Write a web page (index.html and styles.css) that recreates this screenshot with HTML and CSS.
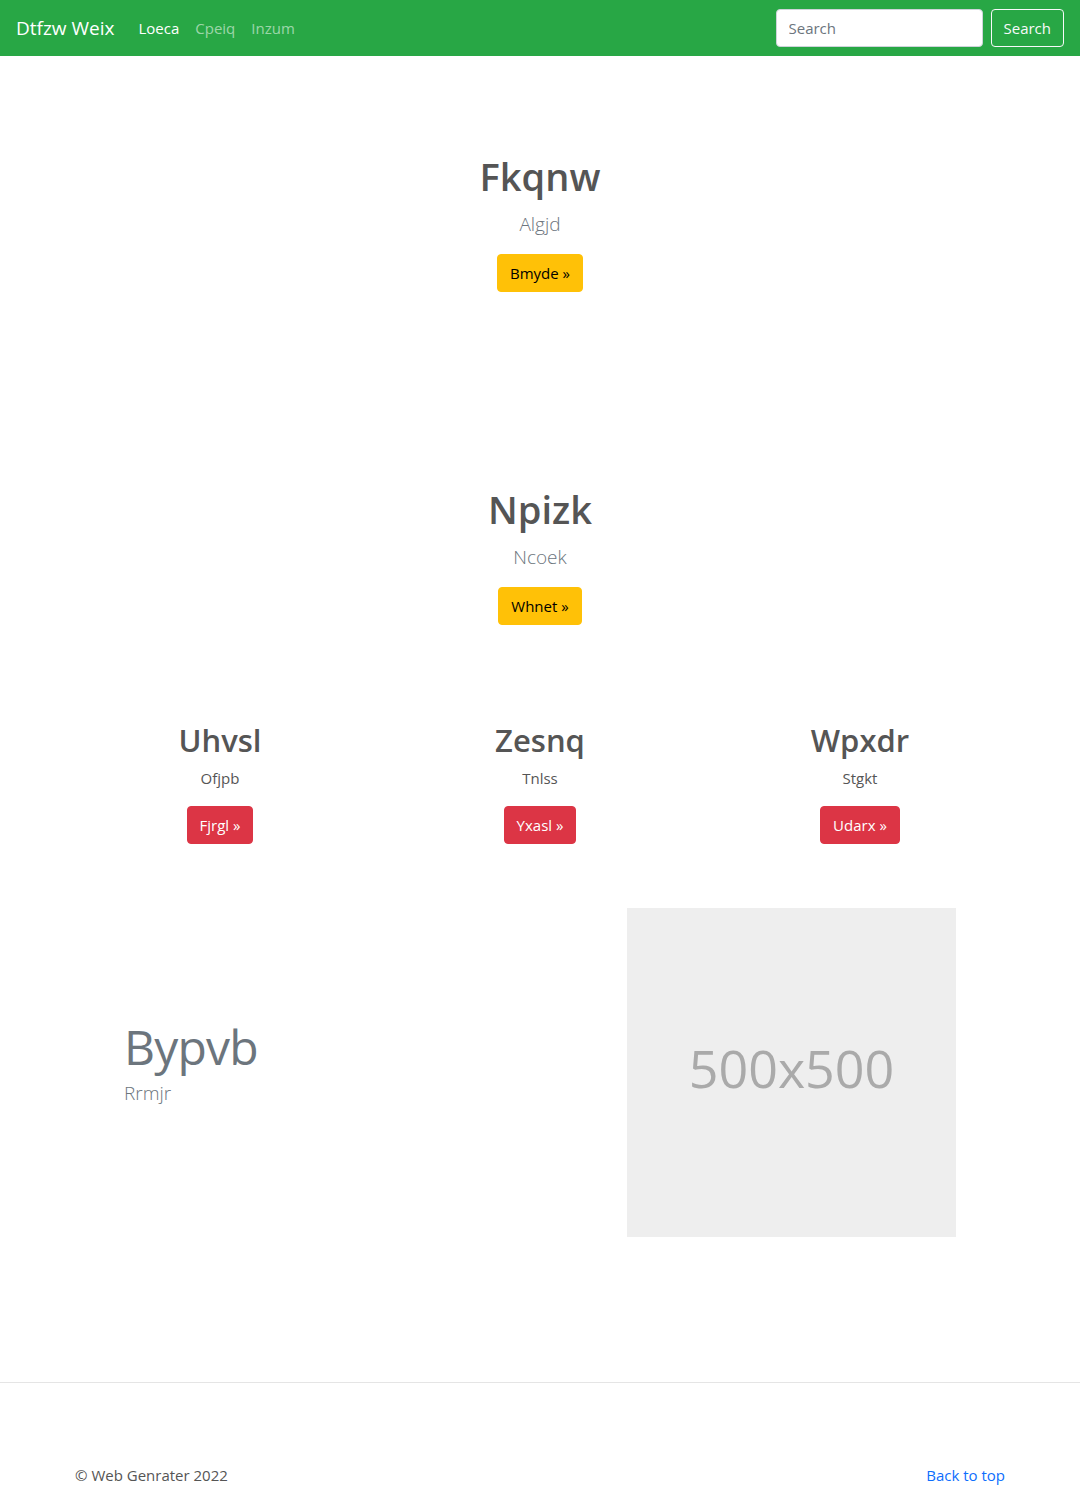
FILE: index.html
```html
<!DOCTYPE html>
<html lang="en">
<head>
<meta charset="utf-8">
<title>Dtfzw Weix</title>
<link rel="stylesheet" href="styles.css">
</head>
<body>
<header class="navbar">
  <div class="nav-left">
    <a class="brand" href="#">Dtfzw Weix</a>
    <nav class="nav-links">
      <a class="nav-link active" href="#">Loeca</a>
      <a class="nav-link" href="#">Cpeiq</a>
      <a class="nav-link" href="#">Inzum</a>
    </nav>
  </div>
  <form class="search">
    <input class="search-input" type="search" placeholder="Search">
    <button class="btn btn-outline-light" type="button">Search</button>
  </form>
</header>

<main>
  <section class="hero">
    <h1 class="hero-title">Fkqnw</h1>
    <p class="lead">Algjd</p>
    <a class="btn btn-warning" href="#">Bmyde »</a>
  </section>

  <section class="hero">
    <h1 class="hero-title">Npizk</h1>
    <p class="lead">Ncoek</p>
    <a class="btn btn-warning" href="#">Whnet »</a>
  </section>

  <section class="container cols">
    <div class="col">
      <h2 class="col-title">Uhvsl</h2>
      <p class="col-text">Ofjpb</p>
      <a class="btn btn-danger" href="#">Fjrgl »</a>
    </div>
    <div class="col">
      <h2 class="col-title">Zesnq</h2>
      <p class="col-text">Tnlss</p>
      <a class="btn btn-danger" href="#">Yxasl »</a>
    </div>
    <div class="col">
      <h2 class="col-title">Wpxdr</h2>
      <p class="col-text">Stgkt</p>
      <a class="btn btn-danger" href="#">Udarx »</a>
    </div>
  </section>

  <section class="container featurette">
    <div class="feat-text">
      <h2 class="feat-heading">Bypvb</h2>
      <p class="feat-lead">Rrmjr</p>
    </div>
    <div class="placeholder"><span>500x500</span></div>
  </section>
</main>

<hr class="divider">

<footer class="container footer">
  <p class="copy">© Web Genrater 2022</p>
  <a class="top-link" href="#">Back to top</a>
</footer>
</body>
</html>
```

FILE: styles.css
```css
* { box-sizing: border-box; }
html, body { margin: 0; padding: 0; }
body {
  font-family: "Open Sans", "Noto Sans", sans-serif;
  font-size: 16px;
  line-height: 1.5;
  color: #212529;
  background: #fff;
}
a { text-decoration: none; }

.navbar {
  height: 56px;
  background: #28a745;
  display: flex;
  align-items: center;
  justify-content: space-between;
  padding: 0 16px;
}
.nav-left { display: flex; align-items: center; }
.brand {
  color: #fff;
  font-size: 19px;
  line-height: 30px;
  margin-right: 16px;
}
.nav-links { display: flex; }
.nav-link {
  color: rgba(255,255,255,.55);
  font-size: 15px;
  padding: 8px 8px;
}
.nav-link.active { color: #fff; }
.search { display: flex; align-items: center; gap: 8px; }
.search-input {
  width: 207px;
  height: 38px;
  border: 1px solid #ced4da;
  border-radius: 4px;
  padding: 6px 12px;
  font: inherit;
  font-size: 15px;
  color: #212529;
}
.search-input::placeholder { color: #6c757d; }

.btn {
  display: inline-block;
  height: 38px;
  line-height: 24px;
  padding: 6px 12px;
  border: 1px solid transparent;
  border-radius: 4px;
  font-size: 15px;
  font-family: inherit;
}
.btn-outline-light { background: transparent; border-color: #f8f9fa; color: #f8f9fa; }
.btn-warning { background: #ffc107; border-color: #ffc107; color: #000; }
.btn-danger { background: #dc3545; border-color: #dc3545; color: #fff; }

.hero {
  text-align: center;
  padding: 97px 0 97px;
}
.hero-title {
  margin: 0 0 10px;
  font-size: 38px;
  font-weight: 600;
  line-height: 46px;
  color: #555;
}
.lead {
  margin: 0 0 15px;
  font-size: 19px;
  font-weight: 300;
  line-height: 30px;
  color: #6c757d;
}

.container { width: 960px; margin: 0 auto; }
.cols {
  display: grid;
  grid-template-columns: repeat(3, 1fr);
  text-align: center;
}
.col-title {
  margin: 0 0 7px;
  font-size: 31px;
  font-weight: 600;
  line-height: 37px;
  color: #555;
}
.col-text { margin: 0 0 16px; font-size: 15px; line-height: 24px; color: #555; }

.featurette {
  display: flex;
  align-items: center;
  margin-top: 64px;
}
.feat-text { flex: 1; padding-left: 64px; padding-bottom: 20px; }
.feat-heading {
  margin: 0 0 2px;
  font-size: 48px;
  font-weight: 400;
  line-height: 58px;
  color: #6c757d;
  letter-spacing: -0.8px;
}
.feat-lead {
  margin: 0;
  font-size: 19px;
  font-weight: 300;
  line-height: 30px;
  color: #6c757d;
}
.placeholder {
  width: 329px;
  height: 329px;
  margin-right: 64px;
  padding-bottom: 9px;
  background: #eee;
  color: #aaa;
  display: flex;
  align-items: center;
  justify-content: center;
  font-size: 52px;
}

.divider {
  margin: 145px 0 0;
  border: 0;
  border-top: 1px solid #e5e5e5;
}
.footer {
  display: flex;
  justify-content: space-between;
  align-items: center;
  padding: 81px 15px 0;
}
.copy { margin: 0; color: #555; font-size: 15px; }
.top-link { color: #0d6efd; font-size: 15px; }
```
